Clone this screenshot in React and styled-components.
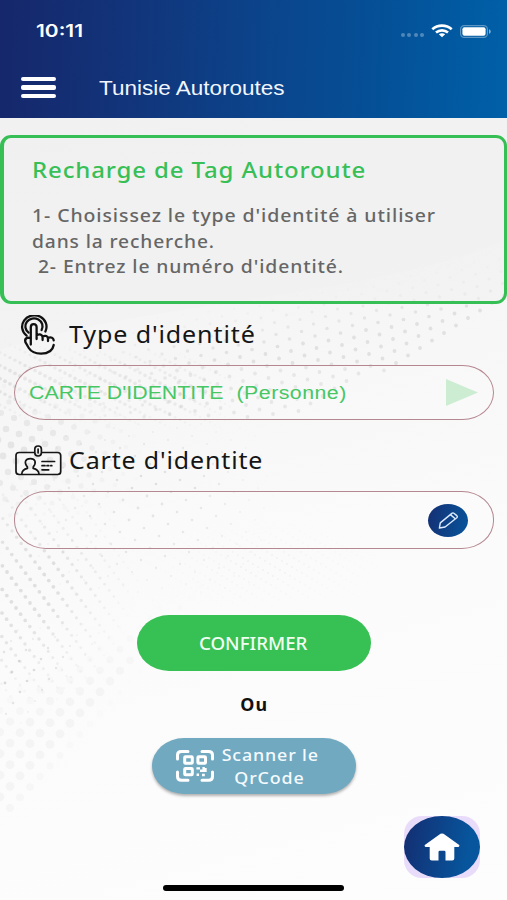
import React from 'react';
//styling
import styled, {createGlobalStyle} from 'styled-components';

//one lattice of dots, the fade function decides strength (0 to 1) at each point
const makeDots = (ux, uy, vx, vy, radius, opacity, fade) => {
  const dots = [];
  for (let i = -90; i < 130; i++) {
    for (let j = -90; j < 130; j++) {
      const x = i * ux + j * vx;
      const y = 300 + i * uy + j * vy;
      if (x < -4 || x > 511 || y < 230 || y > 815) continue;
      const s = Math.min(1, fade(x, y));
      if (s > 0.04) {
        dots.push({x, y, r: radius * (0.6 + 0.4 * s), o: opacity * s});
      }
    }
  }
  return dots;
};

const bump = (t) => (t <= 0 || t >= 1 ? 0 : Math.sin(Math.PI * t));
const clamp = (t) => Math.max(0, Math.min(1, t));

const dotFields = [
  //upper wave
  makeDots(13.5, 4.5, 12, -7.5, 1.9, 0.11, (x, y) => {
    const top = 345 - x * 0.2;
    const low = x > 300 ? 418 - (x - 300) * 0.56 : 418;
    if (y < top || y > low) return 0;
    return clamp((y - top) / 60) * clamp((x - 20) / 150);
  }),
  //dense streaks
  makeDots(5, 2.6, 5, -10.5, 1.9, 0.1, (x, y) => {
    if (x > 240) return 0;
    return bump((y - 340 - x * 0.06) / 80) * clamp((245 - x) / 70);
  }),
  //large dots on the left
  makeDots(13, 5, 8, -11, 3.4, 0.085, (x, y) => bump((y - 375) / 150) * clamp((150 - x) / 110)),
  //fine dots in the middle
  makeDots(15, 8, 9, -12, 1.4, 0.13, (x, y) => bump((y - 405) / 200) * bump((x - 10) / 270)),
  //diagonal lines
  makeDots(4.6, 6.2, 14, -5, 1.9, 0.13, (x, y) =>
    bump((y - 470) / 240) * clamp((145 - x - Math.abs(y - 580) * 0.25) / 90)),
  makeDots(15, 9, 7, -11, 1.4, 0.16, (x, y) => bump((y - 620) / 125) * clamp((765 - y - x) / 60)),
  //faint lines above the button
  makeDots(5, 3, 7, -6, 0.9, 0.05, (x, y) => bump((y - 515) / 100) * bump((x - 130) / 270)),
  //soft dots at the bottom
  makeDots(20, 0.6, 10, -10.5, 4.4, 0.036, (x, y) =>
    clamp((y - 680 + x * 0.5) / 60) * clamp((842 - y - x * 1.2) / 30)),
];

const App = () => {
  return (
    <>
      <GlobalStyle />
      <Screen>
        <Backdrop viewBox="0 0 507 900">
          <path d="M0 118H507V240C360 300 150 300 0 350Z" fill="#f0f0f0" opacity=".3" />
          {dotFields.map((field, n) => (
            <g key={n} fill="#333">
              {field.map((d, i) => (
                <circle key={i} cx={d.x.toFixed(1)} cy={d.y.toFixed(1)} r={d.r.toFixed(2)} opacity={d.o.toFixed(3)} />
              ))}
            </g>
          ))}
        </Backdrop>
        <Header>
          <StatusBar>
            <Time><Stretch $x={1.23}>10:11</Stretch></Time>
            <StatusIcons>
              <Signal><i /><i /><i /><i /></Signal>
              <WifiIcon />
              <BatteryIcon />
            </StatusIcons>
          </StatusBar>
          <NavBar>
            <Burger aria-label="Menu"><span /><span /><span /></Burger>
            <AppTitle><Stretch $x={1.125}>Tunisie Autoroutes</Stretch></AppTitle>
          </NavBar>
        </Header>

        <InfoCard>
          <h2><Stretch $x={1.09}>Recharge de Tag Autoroute</Stretch></h2>
          <p><Stretch $x={1.127}>1- Choisissez le type d'identité à utiliser</Stretch></p>
          <p><Stretch $x={1.11}>dans la recherche.</Stretch></p>
          <p><Stretch $x={1.118}>&nbsp;2- Entrez le numéro d'identité.</Stretch></p>
        </InfoCard>

        <Label>
          <TouchIcon />
          <Stretch $x={1.09}>Type d'identité</Stretch>
        </Label>
        <Field $height={55}>
          <Choice><Stretch $x={1.185}>CARTE D'IDENTITE&nbsp; <Detail>(Personne)</Detail></Stretch></Choice>
          <Arrow viewBox="0 0 32 27"><path d="M0 0L32 13.5L0 27Z" fill="#cdedd3" /></Arrow>
        </Field>

        <Label $second>
          <CardIcon />
          <Stretch $x={1.085}>Carte d'identite</Stretch>
        </Label>
        <Field $height={58}>
          <EditButton aria-label="Modifier"><PencilIcon /></EditButton>
        </Field>

        <Actions>
          <Confirm><Stretch $x={1.04} $center>CONFIRMER</Stretch></Confirm>
          <Or><Stretch $x={1.05} $center>Ou</Stretch></Or>
          <Scan>
            <QrIcon />
            <ScanText>
              <Stretch $x={1.05} $center>Scanner le</Stretch>
              <Stretch $x={1.05} $center>QrCode</Stretch>
            </ScanText>
          </Scan>
        </Actions>

        <Footer>
          <HomeWrap><HomeButton aria-label="Accueil"><HomeIcon /></HomeButton></HomeWrap>
          <HomeIndicator />
        </Footer>
      </Screen>
    </>
  );
};

//icons

const WifiIcon = () => (
  <svg width="22" height="14" viewBox="0 0 22 14" fill="none" stroke="#fff" strokeWidth="2.7">
    <path d="M1.3 5.2C6.8.3 15.2.3 20.7 5.2" />
    <path d="M5 8.6C8.5 5.6 13.5 5.6 17 8.6" />
    <path d="M11 13.2L7.8 10.3C9.6 8.8 12.4 8.8 14.2 10.3Z" fill="#fff" stroke="none" />
  </svg>
);

const BatteryIcon = () => (
  <svg width="32" height="13" viewBox="0 0 32 13">
    <rect x=".6" y=".6" width="26.8" height="11.8" rx="3.6" fill="none" stroke="#fff" strokeOpacity=".36" strokeWidth="1.2" />
    <rect x="2.4" y="2.2" width="23.2" height="8.6" rx="2" fill="#fff" />
    <path d="M29 4.2C31.4 5.2 31.4 7.8 29 8.8Z" fill="#fff" opacity=".5" />
  </svg>
);

const TouchIcon = () => (
  <svg width="47" height="40" viewBox="0 0 47 40" fill="none" stroke="#111" strokeWidth="2.3" strokeLinecap="round" strokeLinejoin="round">
    <path d="M11.6 20.6A12.2 11.4 0 1 1 30.4 16.5" />
    <path d="M13.6 17.6A8.6 8 0 1 1 26.6 15" />
    <path d="M15.8 29.5V12.3Q15.8 9.1 18.7 9.1T21.6 12.3V24M21.6 20.2Q26.8 18 27.6 22V25M27.6 21.3Q32.4 19.6 33 23.5V26M33 22.8Q38 21.4 38.7 25.3" />
    <path d="M38.7 30Q37.3 38.6 26 38.6Q17.2 38.6 13.8 33L10.4 27.2Q9.3 23.8 12.4 22.6L15.2 22.8" />
  </svg>
);

const CardIcon = () => (
  <svg width="47" height="31" viewBox="0 0 47 31" fill="none" stroke="#161616" strokeWidth="1.7" strokeLinecap="round">
    <path d="M18.6 7.5H4.2Q1 7.5 1 10.5V26.5Q1 29.5 4.2 29.5H42.5Q45.7 29.5 45.7 26.5V10.5Q45.7 7.5 42.5 7.5H27.4" />
    <rect x="19.8" y="1" width="6.6" height="10" rx="3.2" />
    <path d="M23.1 4V7.8" />
    <path d="M12.4 23.3V22C8.7 17.2 10.4 13.6 15.3 13.6S21.8 17.2 18.2 22V23.3Q23.5 24.3 24 29M12.4 23.3Q7.1 24.3 6.8 29" />
    <path d="M27 16.5H39.6M27 20.7H30M32 20.7H33.8M35.8 20.7H36.8M27 24.8H33.7" />
  </svg>
);

const PencilIcon = () => (
  <svg width="22" height="19" viewBox="0 0 24 20" fill="none" stroke="#dcebff" strokeWidth="1.5" strokeLinejoin="round">
    <path d="M2.6 18.2L3.6 12.6L16.2 2.2Q17.4 1.2 18.8 2.3L21.6 4.7Q22.8 5.9 21.6 7L8.8 17.1Z" />
    <path d="M14.6 3.6L19.9 8.2" />
  </svg>
);

const QrIcon = () => (
  <svg width="38" height="32" viewBox="0 0 38 32" fill="none" stroke="#fff" strokeWidth="3">
    <path d="M1.5 9V5Q1.5 1.5 5.5 1.5H12M26 1.5H32.5Q36.5 1.5 36.5 5V9M36.5 22V26.5Q36.5 30.3 32.5 30.3H26M12 30.3H5.5Q1.5 30.3 1.5 26.5V22" strokeLinecap="round" />
    <rect x="8.7" y="6.8" width="7.6" height="6.4" rx=".8" />
    <rect x="21.9" y="6.8" width="7.6" height="6.4" rx=".8" />
    <rect x="8.7" y="18.4" width="7.6" height="6.4" rx=".8" />
    <path d="M20.4 18.4H24M27.6 17V20.8H24M20.6 24.8H23M26 25H28.8M29.5 18V22" strokeWidth="2.4" />
  </svg>
);

const HomeIcon = () => (
  <svg width="36" height="28" viewBox="0 0 36 28">
    <path d="M16.5.8Q18 0 19.5.8L35.2 12Q36 13.2 34.5 14H30.3V25.5Q30.3 27.4 28.2 27.4H21.5V19Q21.5 17.8 20.2 17.8H15.8Q14.5 17.8 14.5 19V27.4H7.8Q5.7 27.4 5.7 25.5V14H1.5Q0 13.2.8 12Z" fill="#fff" />
  </svg>
);

//styles

const GlobalStyle = createGlobalStyle`
*{
  box-sizing:border-box;
}
body{
  margin:0;
  overflow:hidden;
}
h1,h2,p{
  margin:0;
}
button{
  border:0;
  padding:0;
  font:inherit;
}
`;

const Screen = styled.main`
position:relative;
width:507px;
height:900px;
display:flex;
flex-direction:column;
overflow:hidden;
background:linear-gradient(165deg,#f2f2f2 0%,#f5f5f5 35%,#fbfbfb 65%,#fdfdfd 100%);
font-family:"Noto Sans",sans-serif;
`;

const Backdrop = styled.svg`
position:absolute;
inset:0;
width:100%;
height:100%;
& ~ *{
  position:relative;
}
`;

//widens the letters without changing their height
const Stretch = styled.span`
display:inline-block;
white-space:nowrap;
transform:scaleX(${(p) => p.$x});
transform-origin:${(p) => (p.$center ? 'center' : 'left')};
`;

const Header = styled.header`
height:118px;
flex:none;
background:linear-gradient(92deg,#16276b 0%,#12347a 25%,#0b448b 52%,#045198 76%,#0060a8 100%);
`;

const StatusBar = styled.div`
height:62px;
display:flex;
justify-content:space-between;
align-items:center;
padding:0 15px 0 36px;
`;

const Time = styled.div`
color:#fff;
font:600 17px "Inter",sans-serif;
`;

const StatusIcons = styled.div`
display:flex;
align-items:center;
gap:7px;
`;

const Signal = styled.div`
display:flex;
gap:2.4px;
padding-top:7px;
i{
  width:4px;
  height:4px;
  border-radius:50%;
  background:rgba(255,255,255,0.3);
}
`;

const NavBar = styled.nav`
display:flex;
align-items:center;
height:51px;
padding-left:21px;
gap:43px;
`;

const Burger = styled.button`
width:35px;
display:flex;
flex-direction:column;
gap:4px;
background:none;
span{
  height:4.2px;
  border-radius:2px;
  background:#fff;
}
`;

const AppTitle = styled.h1`
padding-top:2px;
color:#f2f6ff;
font:400 20px "Liberation Sans",sans-serif;
`;

const InfoCard = styled.section`
height:169px;
flex:none;
margin-top:17px;
padding:15px 0 0 28px;
border:3px solid #36bf55;
border-left-width:4px;
border-radius:11px;
background:rgba(240,240,240,0.5);
h2{
  margin-bottom:18px;
  color:#38bf56;
  font-size:22px;
  font-weight:500;
  line-height:32px;
  letter-spacing:0.8px;
}
p{
  color:#666;
  font-size:17.3px;
  font-weight:500;
  line-height:25.5px;
  letter-spacing:0.8px;
}
`;

const Label = styled.div`
height:${(p) => (p.$second ? '71px' : '61px')};
flex:none;
display:flex;
align-items:center;
gap:7px;
padding:${(p) => (p.$second ? '10px 0 0 15px' : '0 0 0 15px')};
color:#151515;
font-size:23px;
letter-spacing:0.8px;
${Stretch}{
  margin-top:-2px;
}
`;

const Field = styled.div`
height:${(p) => p.$height}px;
flex:none;
display:flex;
align-items:center;
justify-content:space-between;
margin:0 13px 0 14px;
padding:0 15px 0 14px;
border:1.3px solid #b58790;
border-radius:32px / 28px;
background:rgba(255,255,255,0.2);
`;

const Choice = styled.span`
padding-top:1px;
color:#46c764;
font:400 18px "Liberation Sans",sans-serif;
`;

const Detail = styled.span`
margin-left:1px;
letter-spacing:0.4px;
`;

const Arrow = styled.svg`
width:32px;
height:27px;
`;

const EditButton = styled.button`
width:40px;
height:33px;
display:grid;
place-items:center;
margin:0 10px 0 auto;
border-radius:50%;
background:linear-gradient(100deg,#152f73,#07559c);
`;

const Actions = styled.div`
display:flex;
flex-direction:column;
align-items:center;
margin-top:66px;
`;

const Confirm = styled.button`
width:234px;
height:56px;
border-radius:32px / 28px;
background:#37c053;
color:#f0fff2;
font-size:18px;
font-weight:500;
`;

const Or = styled.p`
height:67px;
padding-left:2px;
line-height:67px;
color:#111;
font-size:17px;
font-weight:700;
letter-spacing:1px;
`;

const Scan = styled.button`
width:204px;
height:56px;
display:flex;
align-items:center;
gap:10px;
padding-left:24px;
border-radius:32px / 28px;
background:#71a9c1;
box-shadow:0 2px 3px rgba(0,0,0,0.3);
color:#f5fbff;
`;

const ScanText = styled.span`
display:flex;
flex-direction:column;
align-items:center;
font-size:17px;
font-weight:500;
line-height:23px;
letter-spacing:0.8px;
`;

const Footer = styled.footer`
display:flex;
flex-direction:column;
align-items:center;
margin-top:22px;
`;

const HomeWrap = styled.div`
align-self:flex-end;
width:76px;
height:62px;
margin:0 27px 7px 0;
border-radius:18px;
background:#e9dcfb;
`;

const HomeButton = styled.button`
width:76px;
height:62px;
display:grid;
place-items:center;
border-radius:50%;
background:linear-gradient(100deg,#142d71,#07559c 80%);
`;

const HomeIndicator = styled.div`
width:181px;
height:6px;
border-radius:3px;
background:#000;
`;

export default App;
